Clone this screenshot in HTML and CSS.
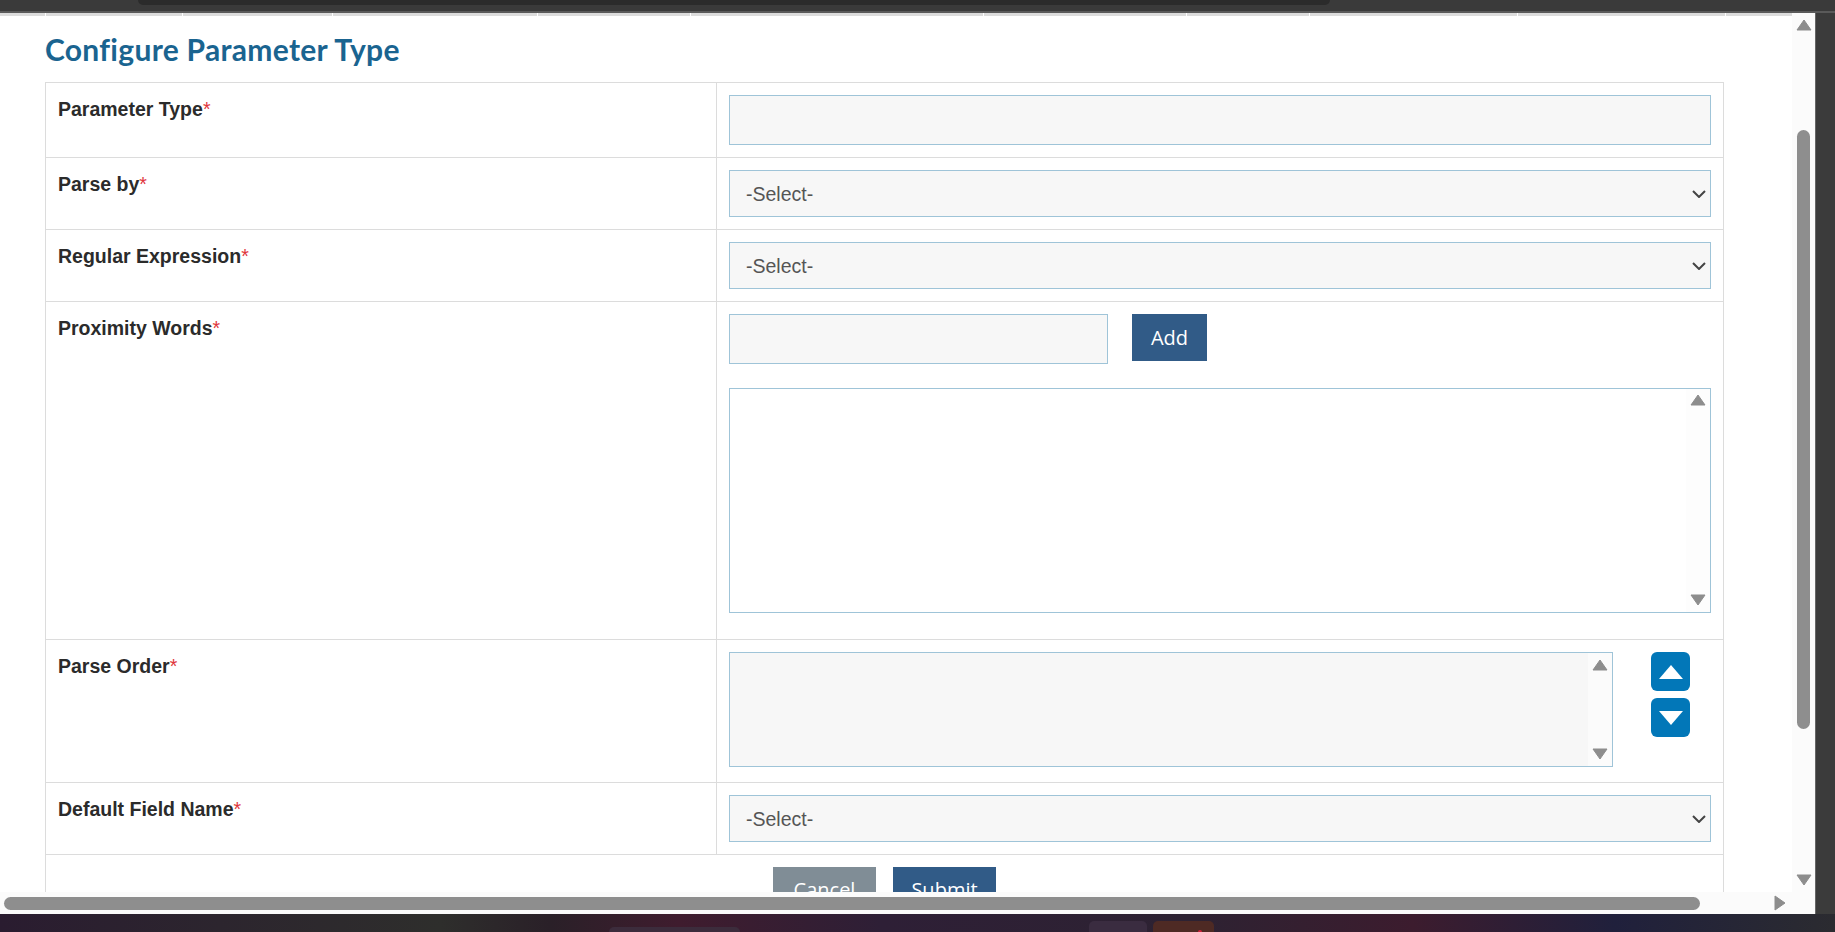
FILE: index.html
```html
<!DOCTYPE html>
<html lang="en">
<head>
<meta charset="utf-8">
<title>Configure Parameter Type</title>
<link rel="stylesheet" href="styles.css">
</head>
<body>
<div class="topbar"><div class="pill"></div></div>
<div class="window">
  <div class="pane">
    <div class="viewport">
      <div class="strip">
        <span class="s1"></span><span class="s2"></span><span class="s3"></span><span class="s4"></span><span class="s5"></span><span class="s6"></span><span class="s7"></span><span class="s8"></span><span class="s9"></span><span class="s10"></span><span class="s11"></span>
      </div>
      <main class="content">
        <h1>Configure Parameter Type</h1>
        <table class="form">
          <colgroup><col class="c1"><col></colgroup>
          <tr class="r1"><th>Parameter Type<em>*</em></th><td><input class="field" type="text"></td></tr>
          <tr><th>Parse by<em>*</em></th><td><select class="field sel"><option>-Select-</option></select></td></tr>
          <tr><th>Regular Expression<em>*</em></th><td><select class="field sel"><option>-Select-</option></select></td></tr>
          <tr>
            <th>Proximity Words<em>*</em></th>
            <td>
              <div class="addrow"><input class="field short" type="text"><button class="btn add" type="button">Add</button></div>
              <div class="list words">
                <textarea></textarea>
                <div class="listbar"><svg class="tri" viewBox="-1 -1 16 12"><path d="M7 0 14 10H0Z"/></svg><svg class="tri" viewBox="-1 -1 16 12"><path d="M0 0H14L7 10Z"/></svg></div>
              </div>
            </td>
          </tr>
          <tr>
            <th>Parse Order<em>*</em></th>
            <td>
              <div class="orderrow">
                <div class="list order">
                  <textarea></textarea>
                  <div class="listbar"><svg class="tri" viewBox="-1 -1 16 12"><path d="M7 0 14 10H0Z"/></svg><svg class="tri" viewBox="-1 -1 16 12"><path d="M0 0H14L7 10Z"/></svg></div>
                </div>
                <div class="movers">
                  <button class="move" type="button" aria-label="Move up"><svg viewBox="0 0 26 16"><path d="M13 1 25 15H1Z"/></svg></button>
                  <button class="move" type="button" aria-label="Move down"><svg viewBox="0 0 26 16"><path d="M1 1H25L13 15Z"/></svg></button>
                </div>
              </div>
            </td>
          </tr>
          <tr><th>Default Field Name<em>*</em></th><td><select class="field sel"><option>-Select-</option></select></td></tr>
          <tr><td class="actions" colspan="2"><button class="btn cancel" type="button">Cancel</button><button class="btn submit" type="button">Submit</button></td></tr>
        </table>
      </main>
    </div>
    <div class="hbar">
      <div class="hthumb"></div>
      <svg class="harrow" viewBox="-1 -1 12 16"><path d="M0 0 10 7 0 14Z"/></svg>
    </div>
  </div>
  <div class="vbar">
    <svg class="tri" viewBox="-1 -1 16 12"><path d="M7 0 14 10H0Z"/></svg>
    <div class="vthumb"></div>
    <svg class="tri" viewBox="-1 -1 16 12"><path d="M0 0H14L7 10Z"/></svg>
  </div>
</div>
<div class="desktop">
  <div class="dock d1"></div>
  <div class="dock d2"></div>
  <div class="dock d3"><span class="dot"></span></div>
</div>
</body>
</html>
```
FILE: styles.css
```css
* { box-sizing: border-box; }
html, body { height: 100%; }
body {
  margin: 0;
  height: 932px;
  overflow: hidden;
  display: flex;
  flex-direction: column;
  background: #3b3b3b;
  font-family: "Liberation Sans", Arial, sans-serif;
  color: #2b2b2b;
}
.topbar { height: 13px; flex: none; background: #3a3a3a; border-bottom: 2px solid #5a5a5a; }
.pill { height: 5px; margin: 0 505px 0 138px; background: #2b2b2b; border-radius: 0 0 8px 8px; }
.window {
  flex: none;
  height: 901px;
  width: 1816px;
  display: flex;
  background: #fff;
  border-right: 1px solid #666;
}
.pane { width: 1792px; display: flex; flex-direction: column; flex: none; }
.viewport { height: 879px; overflow: hidden; flex: none; }
.strip { display: flex; height: 3px; gap: 1px; }
.strip span { background: #dcdcdc; height: 3px; }
.s1 { width: 45px; } .s2 { width: 136px; } .s3 { width: 149px; } .s4 { width: 204px; } .s5 { width: 152px; }
.s6 { width: 292px; } .s7 { width: 202px; } .s8 { width: 122px; } .s9 { width: 207px; } .s10 { width: 207px; } .s11 { flex: 1; }
.content { padding: 0 0 0 45px; width: 1724px; }
h1 {
  margin: 0;
  height: 66px;
  padding-top: 15px;
  font: 700 30px/36px Lato, "Open Sans", sans-serif;
  letter-spacing: .3px;
  color: #1a6490;
}
.form { width: 1679px; border-collapse: collapse; table-layout: fixed; background: #fff; }
.c1 { width: 671px; }
.form th, .form td { border: 1px solid #dcdcdc; padding: 12px; vertical-align: top; }
.form th { text-align: left; padding-top: 15px; font-size: 19.5px; line-height: 22px; font-weight: 700; color: #2b2b2b; }
.form em { font-style: normal; color: #e0353b; font-weight: 400; }
.field {
  display: block;
  width: 100%;
  height: 47px;
  border: 1px solid #9fc4d8;
  background-color: #f7f7f7;
  border-radius: 0;
  outline: 0;
  padding: 0 16px;
  font: 19.5px "Liberation Sans", Arial, sans-serif;
  color: #555;
}
.sel {
  appearance: none;
  background-image: url("data:image/svg+xml,%3Csvg xmlns='http://www.w3.org/2000/svg' width='14' height='8' viewBox='0 0 14 8'%3E%3Cpath d='M1 1l6 6 6-6' fill='none' stroke='%23444' stroke-width='2'/%3E%3C/svg%3E");
  background-repeat: no-repeat;
  background-position: right 4px center;
}
input.field { height: 50px; }
.addrow { display: flex; gap: 24px; align-items: flex-start; margin-bottom: 24px; }
.short { width: 379px; }
.btn {
  height: 47px;
  border: 0;
  padding: 0;
  background: #315b87;
  color: #fff;
  font: 20px "Open Sans", sans-serif;
}
.add { width: 75px; }
.submit { width: 103px; padding-bottom: 2px; }
.cancel { width: 103px; padding-bottom: 2px; background: #808d96; margin-right: 17px; }
.actions { text-align: center; height: 60px; }
.list { display: flex; border: 1px solid #9fc4d8; }
.list textarea { flex: 1; border: 0; outline: 0; resize: none; padding: 6px; background: transparent; display: block; }
.words { height: 225px; margin-bottom: 14px; background: #fff; }
.order { height: 115px; width: 884px; margin-bottom: 3px; background: #f7f7f7; }
.listbar { width: 24px; flex: none; background: #fbfbfb; display: flex; flex-direction: column; justify-content: space-between; align-items: center; padding: 6px 0; }
.words .listbar { background: #fdfdfd; padding-top: 5px; }
.tri { display: block; width: 16px; height: 12px; fill: #8d8d8d; stroke: #8d8d8d; stroke-linejoin: round; flex: none; }
.orderrow { display: flex; justify-content: space-between; align-items: flex-start; padding-right: 21px; }
.movers { display: flex; flex-direction: column; gap: 7px; }
.move {
  width: 39px; height: 39px; padding: 0; border: 0; border-radius: 6px;
  background: #0277b8; display: flex; align-items: center; justify-content: center;
}
.move svg { width: 26px; height: 16px; fill: #fff; display: block; }
.hbar { height: 22px; flex: none; background: #fbfbfb; display: flex; align-items: center; justify-content: space-between; padding: 0 6px 0 4px; }
.hthumb { width: 1696px; height: 13px; background: #8e8e8e; border-radius: 7px; }
.harrow { width: 12px; height: 16px; fill: #8d8d8d; stroke: #8d8d8d; stroke-linejoin: round; }
.vbar { width: 23px; flex: none; background: #fbfbfb; display: flex; flex-direction: column; align-items: center; padding: 6px 0 0; }
.vthumb { flex: none; width: 13px; height: 599px; margin: 99px 0 145px; background: #8e8e8e; border-radius: 7px; }
.desktop {
  flex: 1;
  position: relative;
  background: linear-gradient(90deg, #2a1c30 0%, #2e2e2c 24%, #2a2028 30%, #3f1c2e 37%, #2e1f36 48%, #2d2232 65%, #3c1c2e 77%, #20203c 88%, #2b2b30 100%);
}
.dock { position: absolute; bottom: 0; border-radius: 5px 5px 0 0; }
.d1 { left: 609px; width: 131px; height: 5px; background: #3c2c3c; }
.d2 { left: 1089px; width: 58px; height: 11px; background: #3a2c40; }
.d3 { left: 1153px; width: 61px; height: 11px; background: #4e2a24; }
.dot { position: absolute; left: 45px; bottom: 0; width: 4px; height: 2px; border-radius: 2px 2px 0 0; background: #d0203a; }
```
